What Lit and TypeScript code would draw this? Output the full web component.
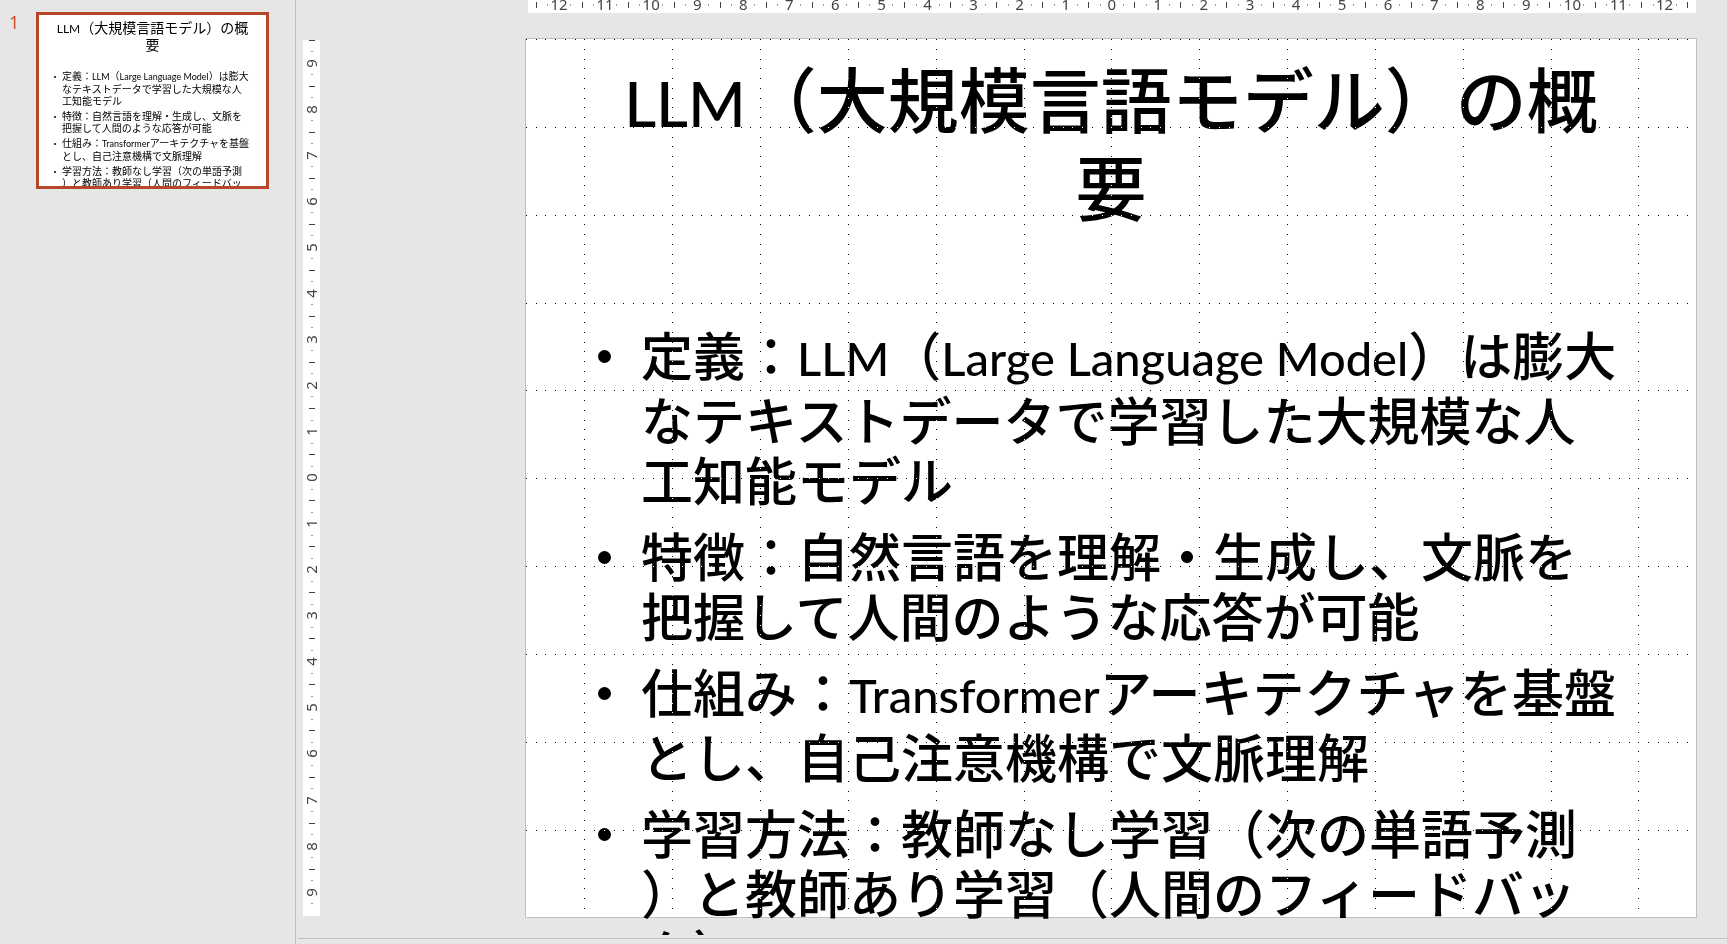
import { LitElement, html, svg, css } from "lit";
import { customElement, property } from "lit/decorators.js";
import { classMap } from "lit/directives/class-map.js";

const TITLE = ["LLM（大規模言語モデル）の概", "要"];

const BULLETS = [
  ["定義：LLM（Large Language Model）は膨大", "なテキストデータで学習した大規模な人", "工知能モデル"],
  ["特徴：自然言語を理解・生成し、文脈を", "把握して人間のような応答が可能"],
  ["仕組み：Transformerアーキテクチャを基盤", "とし、自己注意機構で文脈理解"],
  ["学習方法：教師なし学習（次の単語予測", "）と教師あり学習（人間のフィードバッ", "ク）"],
];

const hasLatin = (text: string) => /[A-Za-z]/.test(text);

/* Splits a line into Latin and Japanese runs so that each gets its own face. */
const runs = (text: string) =>
  text
    .split(/([A-Za-z]+(?: [A-Za-z]+)*)/)
    .filter((part) => part)
    .map((part) => (hasLatin(part) ? html`<span class="latin">${part}</span>` : part));

@customElement("slide-text")
class SlideText extends LitElement {
  @property({ type: Boolean, reflect: true }) small = false;

  static styles = css`
    :host {
      --title: 71px;
      --title-latin: 62px;
      --title-line: 88px;
      --body: 52px;
      --body-latin: 47px;
      --line: 60px;
      --extra: 5px;
      --gap: 16px;
      --top: 13px;
      --between: 96px;
      --indent: 115px;
      --hang: 43px;
      --dot: 13px;
      --drop: 26px;
      display: block;
      padding-top: var(--top);
      color: #000;
      font-family: "Noto Sans CJK JP", sans-serif;
      font-weight: 500;
      text-align: left;
    }
    :host([small]) {
      --title: 14px;
      --title-latin: 12px;
      --title-line: 17px;
      --body: 10px;
      --body-latin: 9px;
      --line: 12px;
      --extra: 1px;
      --gap: 3px;
      --top: 4px;
      --between: 17px;
      --indent: 23px;
      --hang: 8px;
      --dot: 2px;
      --drop: 6px;
      font-weight: 400;
    }
    .title {
      margin: 0;
      font-size: var(--title);
      line-height: var(--title-line);
      font-weight: inherit;
      text-align: center;
    }
    .line {
      display: block;
      white-space: nowrap;
    }
    .latin {
      font-family: Lato, sans-serif;
      line-height: 1;
      font-size: var(--body-latin);
    }
    .title .latin {
      font-size: var(--title-latin);
    }
    .list {
      display: flex;
      flex-direction: column;
      gap: var(--gap);
      margin: var(--between) 0 0;
      padding: 0 0 0 var(--indent);
      list-style: none;
      font-size: var(--body);
      line-height: var(--line);
    }
    .item {
      position: relative;
    }
    .item::before {
      content: "";
      position: absolute;
      top: var(--drop);
      left: calc(var(--hang) * -1);
      width: var(--dot);
      height: var(--dot);
      border-radius: 50%;
      background: #000;
    }
    .mixed {
      padding-bottom: var(--extra);
    }
  `;

  render() {
    return html`
      <h1 class="title">${TITLE.map((line) => html`<span class="line">${runs(line)}</span>`)}</h1>
      <ul class="list">
        ${BULLETS.map(
          (lines) => html`<li class="item">
            ${lines.map(
              (line) => html`<span class=${classMap({ line: true, mixed: hasLatin(line) })}>${runs(line)}</span>`,
            )}
          </li>`,
        )}
      </ul>
    `;
  }
}

@customElement("slide-ruler")
class SlideRuler extends LitElement {
  @property({ type: Number }) reach = 12;
  @property({ type: Boolean, reflect: true }) vertical = false;

  static styles = css`
    :host {
      display: flex;
      justify-content: space-between;
      align-items: center;
      box-sizing: border-box;
      height: 17px;
      padding: 0 8px;
      background: #fff;
      color: #444;
      font: 15px/17px "Noto Sans", "Open Sans", sans-serif;
    }
    :host([vertical]) {
      flex-direction: column;
      width: 17px;
      height: auto;
      padding: 0;
    }
    .mark {
      display: flex;
      justify-content: center;
      align-items: center;
      width: 0;
      height: 17px;
    }
    :host([vertical]) .mark {
      width: 17px;
      height: 0;
    }
    :host([vertical]) .number {
      transform: rotate(-90deg);
    }
    .tick,
    .dot {
      flex: none;
      width: 1px;
      height: 6px;
      background: #444;
    }
    .dot {
      height: 2px;
      background: #a0a0a0;
    }
    :host([vertical]) .tick {
      width: 6px;
      height: 1px;
    }
    :host([vertical]) .dot {
      width: 2px;
      height: 1px;
    }
    :host([vertical]) .mark:last-child {
      visibility: hidden;
    }
  `;

  render() {
    const quarters = Array.from({ length: this.reach * 8 + 5 }, (_, i) => i - this.reach * 4 - 2);
    return quarters.map((q) => {
      if (q % 4 === 0) return html`<span class="mark"><span class="number">${Math.abs(q / 4)}</span></span>`;
      return html`<span class="mark"><span class=${q % 2 === 0 ? "tick" : "dot"}></span></span>`;
    });
  }
}

@customElement("app-root")
class AppRoot extends LitElement {
  static styles = css`
    :host {
      display: flex;
      height: 100vh;
      overflow: hidden;
      background: #e6e6e6;
    }
    .panel {
      display: flex;
      align-items: flex-start;
      flex: none;
      box-sizing: border-box;
      width: 296px;
      padding: 12px 26px 0 9px;
      border-right: 1px solid #c0c0c0;
    }
    .index {
      width: 27px;
      color: #d2502f;
      font: 18px/20px "Noto Sans", "Open Sans", sans-serif;
    }
    .thumb {
      flex: 1;
      min-width: 0;
      height: 177px;
      padding: 0;
      border: 3px solid #b7472a;
      border-radius: 0;
      background: #fff;
      overflow: hidden;
      display: block;
    }
    .thumb-text {
      height: 167px;
      overflow: hidden;
    }
    .main {
      display: flex;
      flex-direction: column;
      flex: 1;
      min-width: 0;
    }
    .canvas {
      flex: 1;
      min-height: 0;
      overflow: hidden;
      display: grid;
      grid-template-columns: 17px minmax(0, 1fr);
      grid-template-rows: 13px auto;
      align-content: start;
      column-gap: 205px;
      row-gap: 25px;
      padding: 0 30px 0 7px;
    }
    .across {
      grid-column: 2;
      margin: -4px 1px 0 3px;
    }
    .down {
      margin: 2px 0;
    }
    .slide {
      position: relative;
      aspect-ratio: 4 / 3;
      min-height: 0;
      border: 1px solid #c0c0c0;
      background: #fff;
    }
    .grid {
      position: absolute;
      inset: 0;
      width: 100%;
      height: 100%;
      overflow: visible;
      mix-blend-mode: difference;
      pointer-events: none;
    }
    .notes {
      flex: none;
      height: 5px;
      margin: 3px 0 0 2px;
      border-top: 1px solid #c0c0c0;
    }
  `;

  /* Dotted guides: one dot per step, one line for every nine steps. */
  private gridPath() {
    const step = 9.76;
    const x = (k: number) => Math.max(0, Math.round(585.4 + step * k));
    const y = (k: number) => Math.round(step * k);
    const dots: string[] = [];
    for (let row = 0; row <= 90; row++) {
      for (let col = -60; col <= 59; col++) {
        if (row % 9 === 0 || col % 9 === 0) dots.push(`M${x(col)} ${y(row)}h1v1h-1z`);
      }
    }
    return dots.join("");
  }

  render() {
    return html`
      <nav class="panel" aria-label="Slides">
        <span class="index">1</span>
        <button class="thumb" type="button" aria-label="Slide 1">
          <slide-text class="thumb-text" small lang="ja"></slide-text>
        </button>
      </nav>
      <main class="main">
        <section class="canvas">
          <slide-ruler class="across" .reach=${12}></slide-ruler>
          <slide-ruler class="down" vertical .reach=${9}></slide-ruler>
          <article class="slide" lang="ja">
            <slide-text></slide-text>
            <svg class="grid" viewBox="0 0 1170 878" preserveAspectRatio="none" shape-rendering="crispEdges" aria-hidden="true">
              ${svg`<path fill="#fff" d=${this.gridPath()}></path>`}
            </svg>
          </article>
        </section>
        <footer class="notes"></footer>
      </main>
    `;
  }
}
